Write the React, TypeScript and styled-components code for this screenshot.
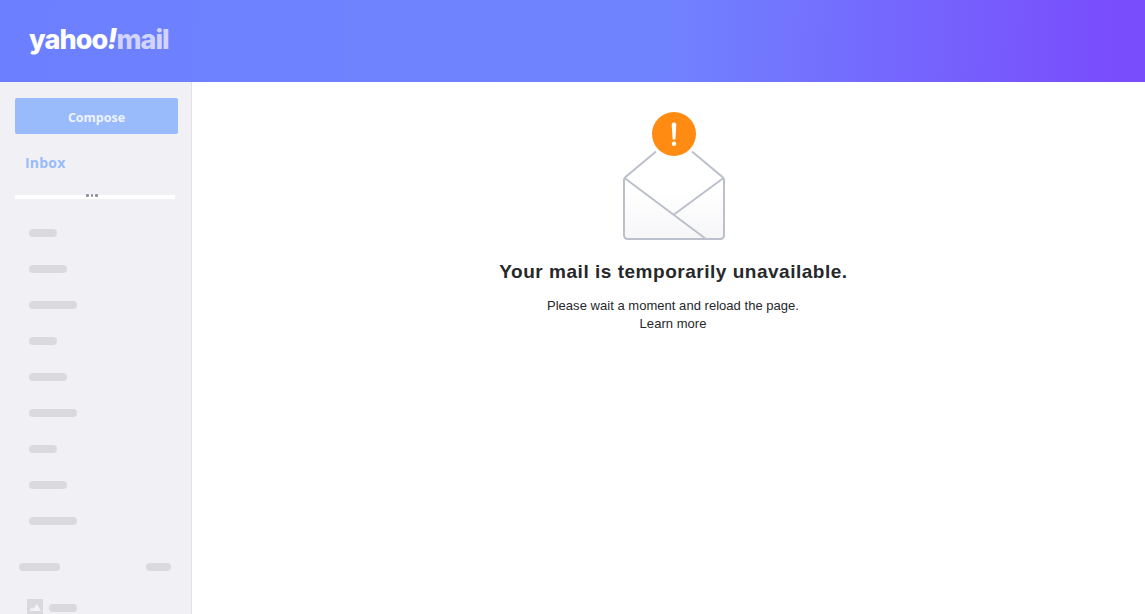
import React from "react";
import styled, { createGlobalStyle } from "styled-components";

const GlobalStyle = createGlobalStyle`
    html, body {
        margin: 0;
        height: 100%;
        background: #ffffff;
        overflow: hidden;
    }
    #root {
        height: 100%;
    }
`;

const sideGroups = [28, 38, 48, 28, 38, 48, 28, 38, 48];

export default function App() {
    return (
        <>
            <GlobalStyle />
            <SPage>
                <SHeader>
                    <SLogo>
                        <span>yahoo</span>
                        <SBang>!</SBang>
                        <SLogoMail>mail</SLogoMail>
                    </SLogo>
                </SHeader>
                <SBody>
                    <SSide>
                        <SCompose>Compose</SCompose>
                        <SInbox>Inbox</SInbox>
                        <SDivider>
                            <SDots>
                                <i />
                                <i />
                                <i />
                            </SDots>
                        </SDivider>
                        <SFolders>
                            {sideGroups.map((w, i) => (
                                <SPill key={i} $w={w} />
                            ))}
                        </SFolders>
                        <SSection>
                            <SPill $w={41} />
                            <SPill $w={25} />
                        </SSection>
                        <SThumbRow>
                            <svg width="16" height="16" viewBox="0 0 16 16">
                                <rect width="16" height="16" fill="#dadade" />
                                <path d="M2.5 12 L5 8 L6.5 10 L9.7 4.7 L14 12 Z" fill="#f4f4f8" />
                            </svg>
                            <SThumbPill $w={28} />
                        </SThumbRow>
                    </SSide>
                    <SMain>
                        <svg width="104" height="128" viewBox="0 0 104 128">
                            <defs>
                                <linearGradient id="env" x1="0" y1="0" x2="0" y2="1">
                                    <stop offset="0.45" stopColor="#ffffff" />
                                    <stop offset="1" stopColor="#f6f6f9" />
                                </linearGradient>
                            </defs>
                            <path
                                d="M34 39.5 L3.5 65 Q2 66.3 2 68 V123 Q2 127 6 127 H98 Q102 127 102 123 V68 Q102 66.3 100.5 65 L70 39.5 Z"
                                fill="url(#env)"
                            />
                            <path
                                d="M34 39.5 L3.5 65 Q2 66.3 2 68 V123 Q2 127 6 127 H98 Q102 127 102 123 V68 Q102 66.3 100.5 65 L70 39.5"
                                fill="none"
                                stroke="#bcc0ca"
                                strokeWidth="2"
                            />
                            <path
                                d="M2.5 66 L84 127 M52 102.5 L101.5 66"
                                fill="none"
                                stroke="#bcc0ca"
                                strokeWidth="2"
                            />
                            <circle cx="52" cy="22" r="22" fill="#ff8b12" />
                            <path d="M49.7 12.7 Q49.7 10.5 52 10.5 Q54.3 10.5 54.3 12.7 L53.4 27.5 H50.6 Z" fill="#ffffff" />
                            <circle cx="52" cy="31.7" r="2.2" fill="#ffffff" />
                        </svg>
                        <STitle>Your mail is temporarily unavailable.</STitle>
                        <SMessage>Please wait a moment and reload the page.</SMessage>
                        <SLink href="#">Learn more</SLink>
                    </SMain>
                </SBody>
            </SPage>
        </>
    );
}

const SPage = styled.div`
    display: flex;
    flex-direction: column;
    height: 100%;
`;

const SHeader = styled.header`
    flex: none;
    display: flex;
    align-items: center;
    box-sizing: border-box;
    height: 82px;
    padding: 0 0 5px 29px;
    background: linear-gradient(92deg, #6c80ff 0%, #7083ff 58%, #794dfc 97%);
`;

const SLogo = styled.div`
    display: flex;
    align-items: baseline;
    font-family: "Inter", "Liberation Sans", sans-serif;
    font-size: 27px;
    font-weight: 800;
    letter-spacing: -0.9px;
    color: #ffffff;
    line-height: 1;
`;

const SBang = styled.span`
    font-style: italic;
    font-size: 28px;
`;

const SLogoMail = styled.span`
    color: #d1d4ff;
    letter-spacing: -1px;
`;

const SBody = styled.div`
    flex: 1;
    display: flex;
    min-height: 0;
`;

const SSide = styled.aside`
    flex: none;
    box-sizing: border-box;
    width: 192px;
    padding: 16px 0 0 15px;
    background: #f0f0f5;
    border-right: 1px solid #e0e0e6;
    overflow: hidden;
`;

const SCompose = styled.div`
    box-sizing: border-box;
    width: 163px;
    height: 36px;
    padding-top: 2px;
    display: flex;
    align-items: center;
    justify-content: center;
    background: #99bbfb;
    border-radius: 2px;
    font-family: "Open Sans", sans-serif;
    font-size: 12.5px;
    font-weight: 700;
    color: #eef3ff;
`;

const SInbox = styled.div`
    margin: 19px 0 0 10px;
    height: 20px;
    line-height: 20px;
    font-family: "Open Sans", sans-serif;
    font-size: 14px;
    font-weight: 700;
    letter-spacing: 0.2px;
    color: #99bbfb;
`;

const SDivider = styled.div`
    position: relative;
    width: 160px;
    height: 4px;
    margin-top: 22px;
    background: #ffffff;
`;

const SDots = styled.div`
    position: absolute;
    top: -1px;
    left: 71px;
    display: flex;
    gap: 2px;

    i {
        display: block;
        width: 2.5px;
        height: 2.5px;
        border-radius: 50%;
        background: #8e8f98;
    }
`;

const SFolders = styled.div`
    display: flex;
    flex-direction: column;
    align-items: flex-start;
    gap: 28px;
    margin: 30px 0 0 14px;
`;

const SPill = styled.div<{ $w: number }>`
    flex: none;
    width: ${(p) => p.$w}px;
    height: 8px;
    border-radius: 4px;
    background: #dadade;
`;

const SSection = styled.div`
    display: flex;
    justify-content: space-between;
    width: 152px;
    margin: 38px 0 0 4px;
`;

const SThumbRow = styled.div`
    display: flex;
    align-items: center;
    gap: 6px;
    margin: 28px 0 0 12px;
`;

const SThumbPill = styled(SPill)`
    margin-top: 2px;
`;

const SMain = styled.main`
    flex: 1;
    display: flex;
    flex-direction: column;
    align-items: center;
    padding: 30px 0 0 10px;
    font-family: "Liberation Sans", Arial, sans-serif;
    color: #26282a;
`;

const STitle = styled.h1`
    margin: 19px 0 0;
    font-size: 19px;
    line-height: 26px;
    font-weight: 700;
    letter-spacing: 0.52px;
`;

const SMessage = styled.p`
    margin: 12px 1px 0 0;
    font-size: 13px;
    line-height: 18px;
    letter-spacing: 0.03px;
`;

const SLink = styled.a`
    margin-right: 1px;
    font-size: 13px;
    line-height: 18px;
    letter-spacing: 0.03px;
    color: #26282a;
    text-decoration: none;
`;
